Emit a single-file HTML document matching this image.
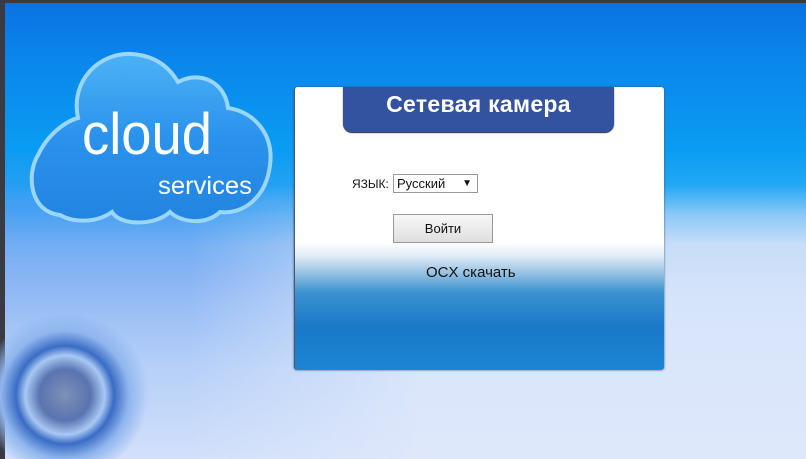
<!DOCTYPE html>
<html><head><meta charset="utf-8"><style>
html,body{margin:0;padding:0;width:806px;height:459px;overflow:hidden;background:#dfe8fb}
#root{position:absolute;left:0;top:0;width:806px;height:459px;overflow:hidden;font-family:"Liberation Sans",sans-serif;
background:linear-gradient(to bottom,#3a3b42 0,#3a3b42 3px,#0a72e2 3px,#0a86ec 60px,#0a9cf2 150px,#22a8f4 185px,#8ccaf6 215px,#c8ddf8 245px,#d6e4fa 300px,#dfe8fb 459px);}
#left{position:absolute;left:0;top:150px;width:420px;height:309px;
background:linear-gradient(to bottom,rgba(30,140,240,0) 0,rgba(40,140,240,0.65) 60px,rgba(80,145,240,0.55) 130px,rgba(120,170,245,0.35) 220px,rgba(160,195,248,0.2) 309px);
-webkit-mask-image:linear-gradient(to right,#000 45%,transparent 100%);mask-image:linear-gradient(to right,#000 45%,transparent 100%)}
#lb{position:absolute;left:0;top:0;width:5px;height:459px;background:#3a3b42}
#glow{position:absolute;left:-20px;top:315px;width:170px;height:160px;border-radius:50%;
background:radial-gradient(circle at 50% 50%,#7f90b8 0,#5a74b0 22%,#a8c8f4 34%,#3a6cc4 42%,#90b6ee 55%,rgba(170,200,245,0) 72%)}
#panel{position:absolute;left:294px;top:87px;width:369px;height:283px;border-radius:3px;
background:linear-gradient(to bottom,#fff 0,#fff 155px,#e4eef6 168px,#9cc4e4 185px,#3c92d0 205px,#1a78c8 240px,#1a86d4 283px);
box-shadow:0 0 2px #33557a;border-left:1px solid #556}
#tab{position:absolute;left:48px;top:0;width:271px;height:45px;background:#33529f;border-radius:0 0 9px 9px;
color:#fff;font-weight:bold;font-size:23px;text-align:center;line-height:34px;box-shadow:0 1px 1px #223;letter-spacing:0.3px}
#lbl{position:absolute;left:57px;top:90px;font-size:12px;color:#111}
#sel{position:absolute;left:98px;top:87px;width:80px;height:17px;border:1px solid #999;background:#fff;font-size:13px;line-height:17px;color:#111;padding-left:3px}
#sel span{position:absolute;right:5px;top:0;font-size:10px}
#btn{position:absolute;left:98px;top:127px;width:98px;height:27px;border:1px solid #999;background:linear-gradient(#f8f8f8,#dedede);text-align:center;line-height:27px;font-size:13px;color:#111}
#ocx{position:absolute;left:131px;top:177px;font-size:15px;color:#111}
</style></head><body><div id="root">
<div id="left"></div>
<div id="lb"></div>
<div id="glow"></div>
<svg style="position:absolute;left:0;top:0" width="300" height="240">
<defs><linearGradient id="cg" x1="0" y1="0" x2="0" y2="1"><stop offset="0" stop-color="#4cb2f6"/><stop offset="0.5" stop-color="#2a92ec"/><stop offset="1" stop-color="#2284e0"/></linearGradient></defs>
<path d="M60,215 C30,212 26,175 38,155 C50,130 70,120 78,118 C70,80 100,52 132,54 C160,56 172,72 178,82 C200,70 225,82 228,108 C255,112 274,135 270,165 C266,200 240,215 220,212 C205,226 180,222 170,212 C155,226 120,226 112,212 C95,224 72,222 60,215 Z" fill="url(#cg)" stroke="#9ad6fa" stroke-width="4"/>
<text x="82" y="154" fill="#fff" font-family="Liberation Sans" font-size="58" textLength="130" lengthAdjust="spacingAndGlyphs">cloud</text>
<text x="158" y="194" fill="#fff" font-family="Liberation Sans" font-size="25" textLength="94" lengthAdjust="spacingAndGlyphs">services</text>
</svg>
<div id="panel">
<div id="tab">Сетевая камера</div>
<div id="lbl">ЯЗЫК:</div>
<div id="sel">Русский<span>▼</span></div>
<div id="btn">Войти</div>
<div id="ocx">OCX скачать</div>
</div>
</div></body></html>
